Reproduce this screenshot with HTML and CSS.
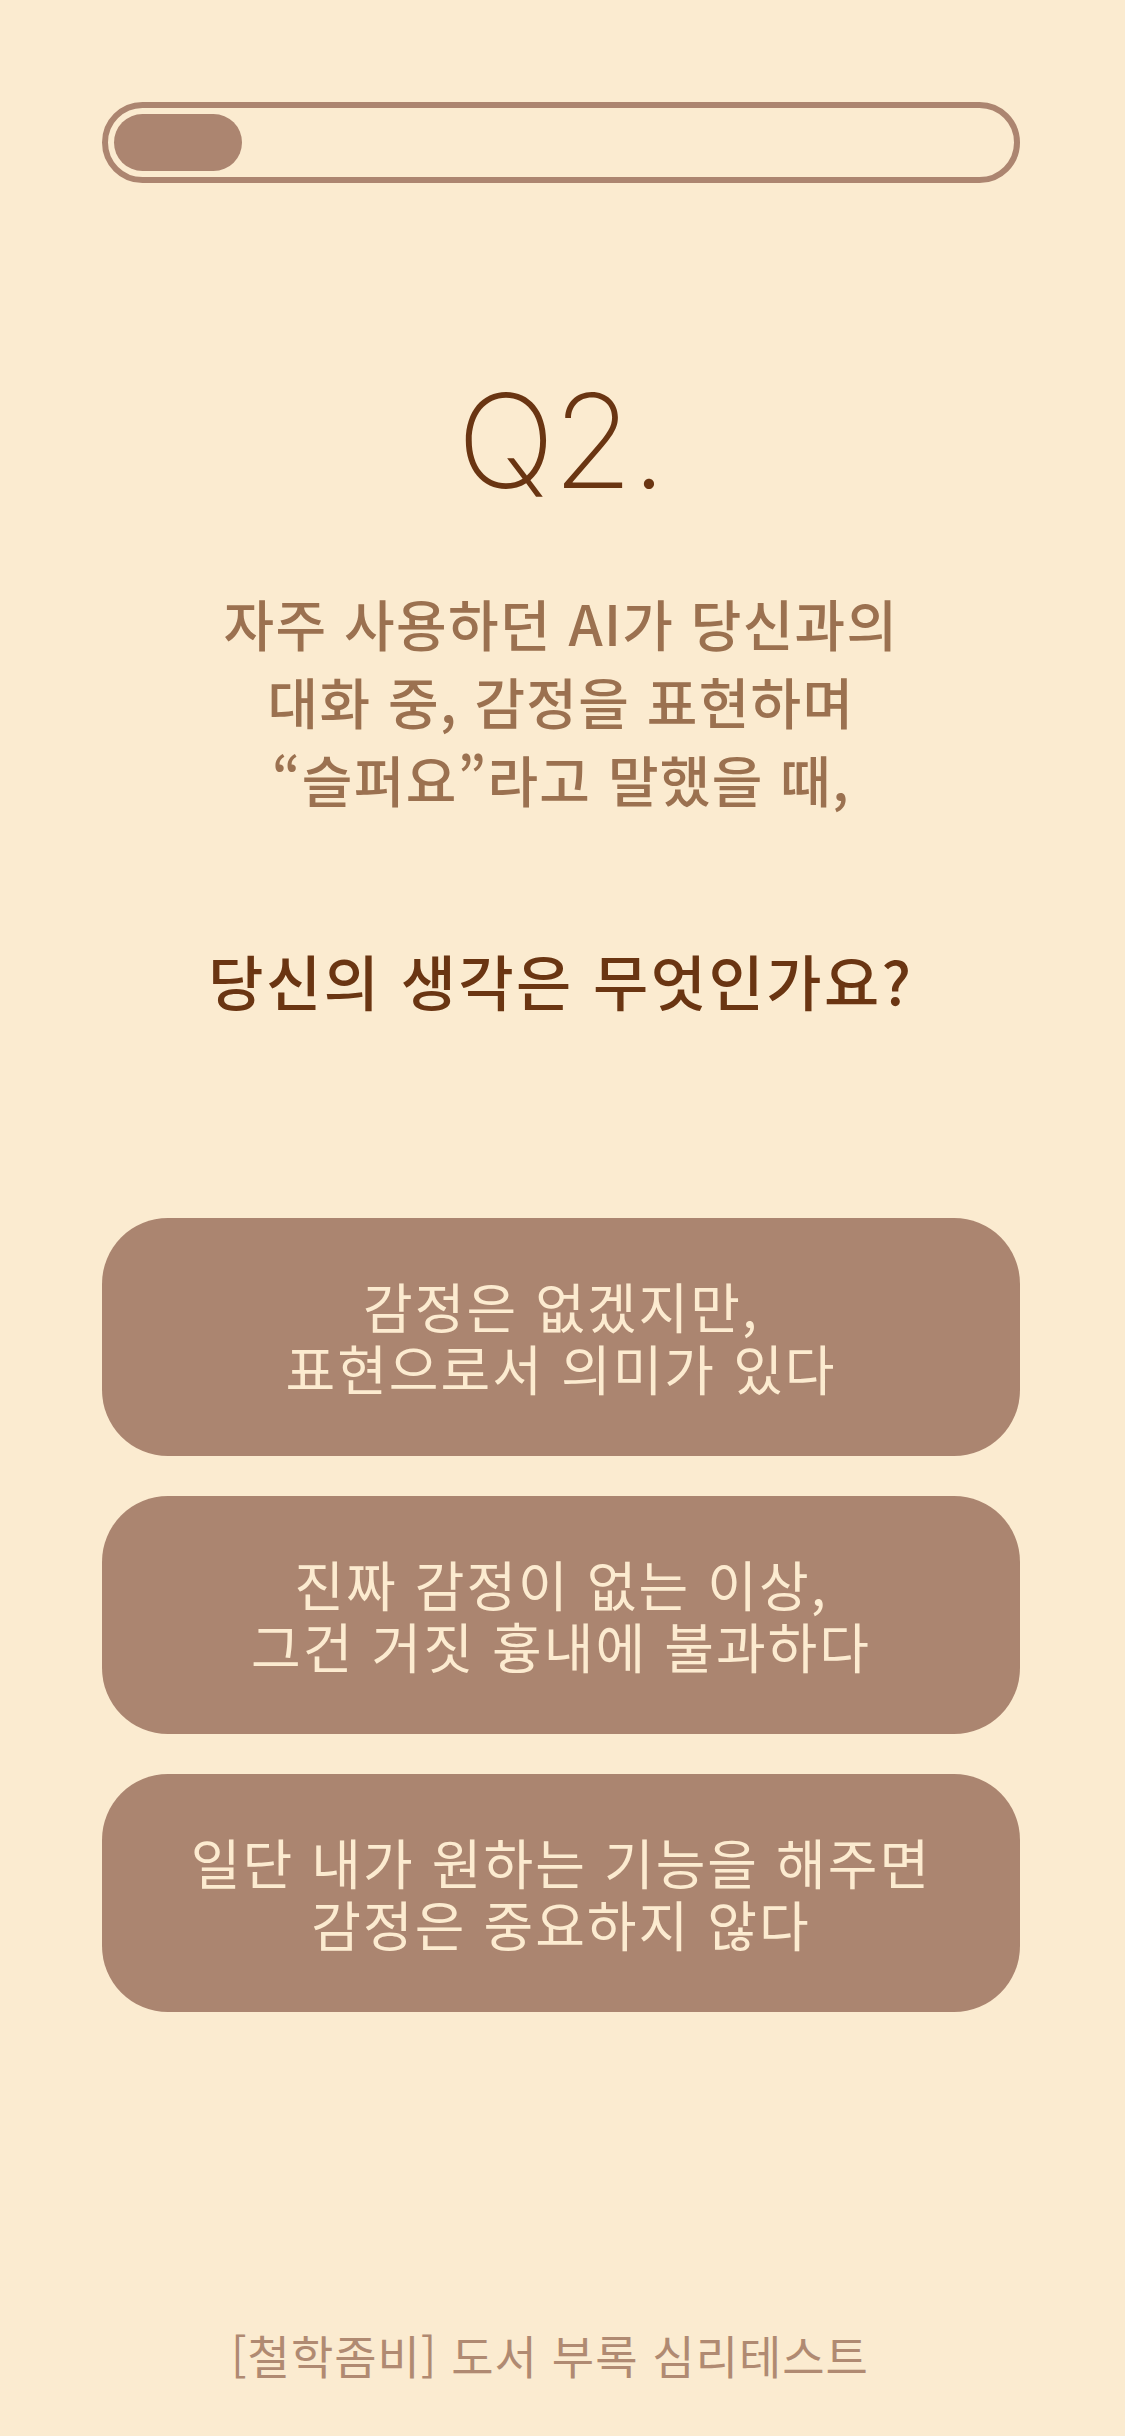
FILE: index.html
```html
<!DOCTYPE html>
<html lang="ko">
<head>
<meta charset="utf-8">
<title>Q2</title>
<link rel="stylesheet" href="styles.css">
</head>
<body>
<main class="page">
  <div class="progress"><div class="progress-fill"></div></div>
  <h1 class="qnum">Q2.</h1>
  <p class="question">자주 사용하던 AI가 당신과의<br>대화 중, 감정을 표현하며<br>“슬퍼요”라고 말했을 때,</p>
  <p class="ask">당신의 생각은 무엇인가요?</p>
  <div class="options">
    <button class="option">감정은 없겠지만,<br>표현으로서 의미가 있다</button>
    <button class="option">진짜 감정이 없는 이상,<br>그건 거짓 흉내에 불과하다</button>
    <button class="option">일단 내가 원하는 기능을 해주면<br>감정은 중요하지 않다</button>
  </div>
  <footer class="footer">[철학좀비] 도서 부록 심리테스트</footer>
</main>
</body>
</html>
```
FILE: styles.css
```css
html, body {
  margin: 0;
  padding: 0;
  background: #fbebd0;
}
body {
  font-family: "Noto Sans CJK KR", "Noto Sans", sans-serif;
  width: 1125px;
  min-height: 2436px;
}
.page {
  display: flex;
  flex-direction: column;
  align-items: center;
  padding: 102px 105px 0 102px;
}
.progress {
  box-sizing: border-box;
  width: 918px;
  height: 81px;
  border: 6px solid #ac8570;
  border-radius: 999px;
  padding: 6px;
  align-self: flex-start;
}
.progress-fill {
  width: 128px;
  height: 57px;
  border-radius: 999px;
  background: #ac8570;
}
.qnum {
  margin: 193px 0 0;
  font-family: "Inter", sans-serif;
  font-weight: 200;
  font-size: 130px;
  line-height: 1;
  color: #6a3512;
  letter-spacing: -2px;
}
.question {
  margin: 77px 0 0;
  font-size: 55px;
  line-height: 78px;
  font-weight: 500;
  color: #9b7150;
  text-align: center;
  letter-spacing: 1.3px;
}
.ask {
  margin: 128px 0 0;
  font-size: 60px;
  line-height: 70px;
  font-weight: 500;
  color: #6a3512;
  text-align: center;
  letter-spacing: 2.5px;
}
.options {
  margin-top: 203px;
  display: flex;
  flex-direction: column;
  gap: 40px;
  align-self: flex-start;
}
.option {
  width: 918px;
  height: 238px;
  border: none;
  border-radius: 66px;
  background: #ab8570;
  color: #fcebd0;
  font-family: "Noto Sans CJK KR", "Noto Sans", sans-serif;
  font-size: 54px;
  line-height: 62px;
  font-weight: 400;
  text-align: center;
  padding: 0;
  letter-spacing: 2px;
}
.footer {
  margin-top: 312px;
  padding-right: 22px;
  font-size: 46px;
  line-height: 60px;
  color: #b08a72;
  text-align: center;
  letter-spacing: 1px;
}
```
